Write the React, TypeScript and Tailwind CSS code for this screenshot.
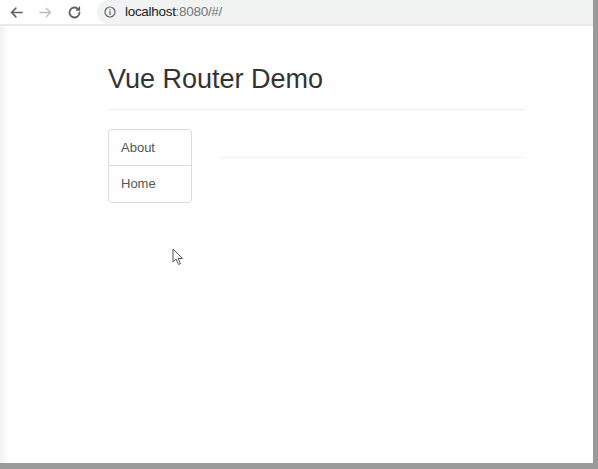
import React from "react";

export default function App() {
  return (
    <div className="w-[598px] h-[469px] overflow-hidden bg-[#9a9a9a] relative" style={{ fontFamily: '"Liberation Sans", Arial, sans-serif' }}>
      <div className="flex h-[463px] w-[593px]">
        <div className="w-[8px] h-full bg-gradient-to-r from-[#f2f2f2] to-[#fdfdfd]" />
        <div className="flex-1 flex flex-col bg-[#fefefe]">
          <div className="h-[24px] flex items-center bg-white -ml-[8px]">
            <div className="w-[97px] flex items-center pl-[9px]">
              <svg width="15" height="15" viewBox="0 0 24 24" fill="none" stroke="#5f6368" strokeWidth="2.6" strokeLinecap="round" strokeLinejoin="round"><path d="M21 12H4M11 5l-7 7 7 7" /></svg>
              <svg width="15" height="15" viewBox="0 0 24 24" className="ml-[14px]" fill="none" stroke="#b9bcbf" strokeWidth="2.2" strokeLinecap="round" strokeLinejoin="round"><path d="M3 12h17M13 5l7 7-7 7" /></svg>
              <svg width="15" height="15" viewBox="0 0 24 24" className="ml-[14px]" fill="none" stroke="#5f6368" strokeWidth="3" strokeLinecap="round"><path d="M20 12a8 8 0 1 1-2.3-5.7" /><path d="M20 3v5h-5" fill="#5f6368" strokeWidth="2" /></svg>
            </div>
            <div className="flex-1 h-[24px] bg-[#f1f3f3] rounded-l-[12px] flex items-center pl-[7px]">
              <svg width="12" height="12" viewBox="0 0 24 24" fill="none" stroke="#5f6368" strokeWidth="2.4"><circle cx="12" cy="12" r="10" /><path d="M12 11v6M12 7v1" strokeLinecap="round" /></svg>
              <span className="ml-[9px] text-[13.5px] tracking-[-0.3px] text-[#202124] leading-none">localhost<span className="text-[#70757a]">:8080/#/</span></span>
            </div>
          </div>
          <div className="h-[2px] bg-[#e8eaea] -ml-[8px]" />
          <div className="pl-[100px] pt-[36px] w-[517px]">
            <h2 className="text-[27px] leading-[34px] text-[#333] m-0">Vue Router Demo</h2>
            <div className="mt-[13px] h-px bg-[#eeeeee]" />
            <div className="flex mt-[19px]">
              <div className="w-[84px] border border-[#dddddd] rounded-[4px] flex flex-col">
                <div className="h-[36px] flex items-center pl-[12px] text-[13px] text-[#555] border-b border-[#dddddd]">About</div>
                <div className="h-[36px] flex items-center pl-[12px] text-[13px] text-[#555]">Home</div>
              </div>
              <div className="ml-[28px] flex-1 pt-[28px]">
                <div className="h-px bg-[#f3f3f3]" />
              </div>
            </div>
          </div>
          <div className="relative">
            <svg className="absolute left-[164px] top-[45px]" width="12" height="18" viewBox="0 0 12 18">
              <path d="M1 1 L1 14 L4 11 L6.5 16.5 L8.5 15.5 L6 10.5 L10.5 10.5 Z" fill="#fff" stroke="#555" strokeWidth="1" strokeLinejoin="round" />
            </svg>
          </div>
        </div>
      </div>
    </div>
  );
}
